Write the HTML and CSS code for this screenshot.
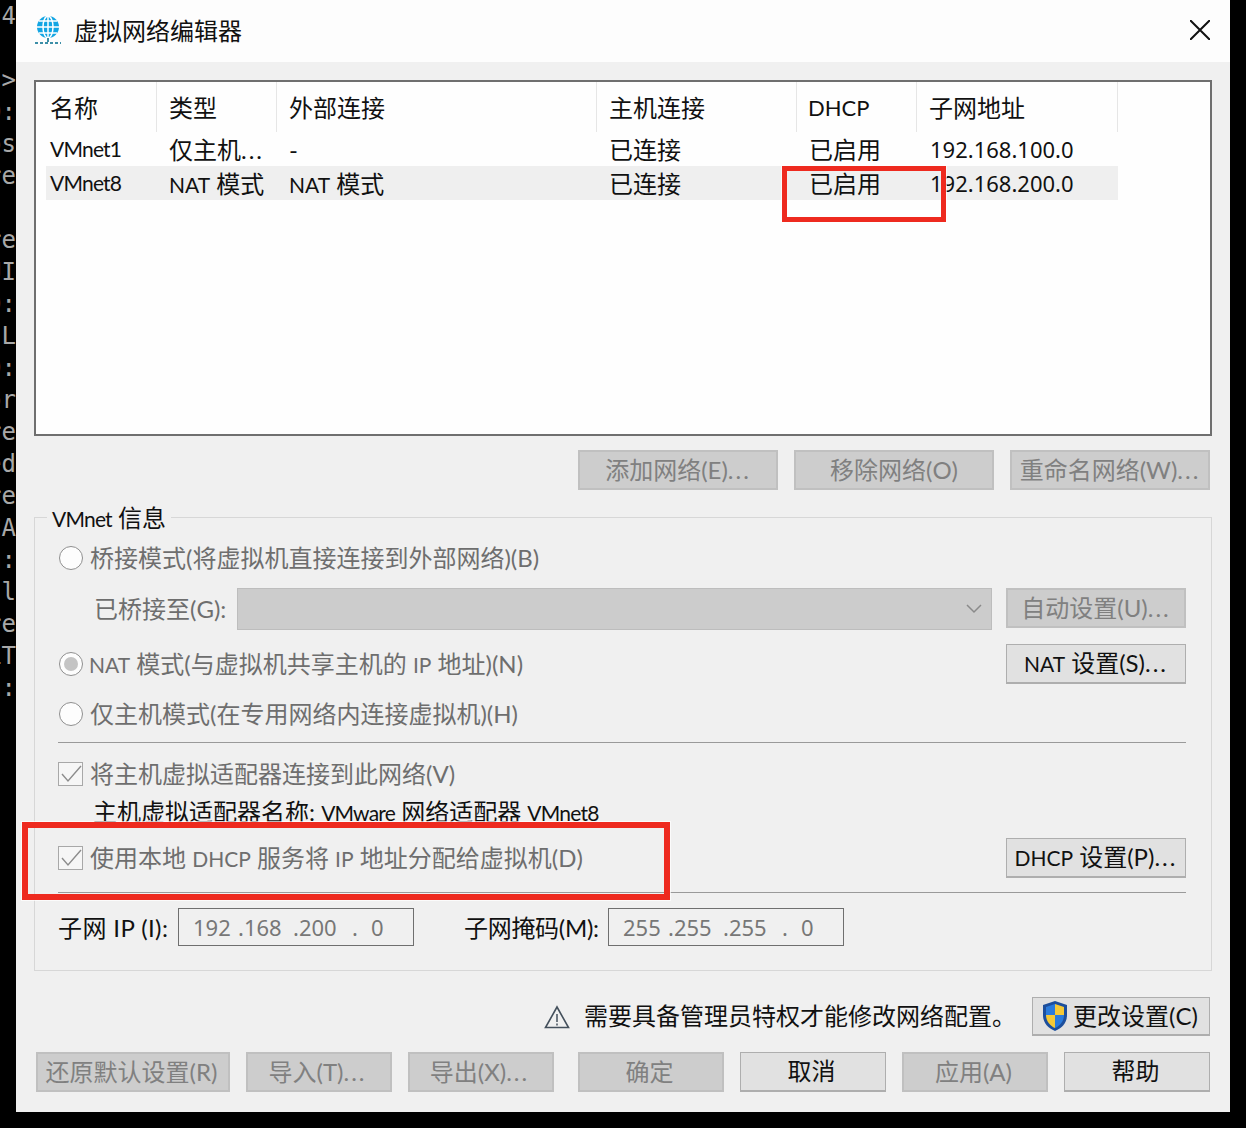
FILE: index.html
```html
<!DOCTYPE html>
<html lang="zh-CN">
<head>
<meta charset="utf-8">
<title>虚拟网络编辑器</title>
<link rel="stylesheet" href="styles.css">
</head>
<body>
<div class="terminal">
  <div>4</div><div></div><div>&gt;</div><div>0:</div><div>os</div><div>re</div><div></div><div>re</div><div>UI</div><div>0:</div><div>L</div><div>0:</div><div>or</div><div>re</div><div>ed</div><div>re</div><div>CA</div><div>a:</div><div>l</div><div>re</div><div>LT</div><div>a:</div>
</div>
<div class="window">
  <header class="titlebar">
    <svg class="globe" viewBox="0 0 28 30" width="28" height="30">
      <circle cx="14" cy="12" r="11" fill="#12a5e3"/>
      <g fill="none" stroke="#fff" stroke-width="1.5">
        <ellipse cx="14" cy="12" rx="5" ry="11"/>
        <path d="M14 1v22M3 12h22M5 6h18M5 18h18"/>
      </g>
      <path d="M14 23v4" stroke="#3d8fa8" stroke-width="2"/>
      <path d="M1 28h26" stroke="#3d8fa8" stroke-width="2" stroke-dasharray="3 2"/>
    </svg>
    <span class="title">虚拟网络编辑器</span>
    <svg class="close" viewBox="0 0 20 20" width="20" height="20"><path d="M0 0l20 20M20 0L0 20" stroke="#111" stroke-width="2"/></svg>
  </header>
  <main class="content">
    <section class="list">
      <div class="row head">
        <div class="cell c1">名称</div><div class="cell c2">类型</div><div class="cell c3">外部连接</div><div class="cell c4">主机连接</div><div class="cell c5 latin">DHCP</div><div class="cell c6">子网地址</div>
      </div>
      <div class="row">
        <div class="cell c1 vm">VMnet1</div><div class="cell c2">仅主机<span class="dots">...</span></div><div class="cell c3">-</div><div class="cell c4">已连接</div><div class="cell c5">已启用</div><div class="cell c6 ip">192.168.100.0</div>
      </div>
      <div class="row selected">
        <div class="cell c1 vm">VMnet8</div><div class="cell c2"><span class="en">NAT</span> 模式</div><div class="cell c3"><span class="en">NAT</span> 模式</div><div class="cell c4">已连接</div><div class="cell c5">已启用</div><div class="cell c6 ip">192.168.200.0</div>
      </div>
    </section>
    <div class="list-actions">
      <button class="btn off wide">添加网络(E)<span class="dots">...</span></button>
      <button class="btn off wide">移除网络(O)</button>
      <button class="btn off wide">重命名网络(W)<span class="dots">...</span></button>
    </div>
    <section class="group">
      <span class="legend"><span class="vm">VMnet</span> 信息</span>
      <div class="line r1"><span class="radio"></span><span class="dim">桥接模式(将虚拟机直接连接到外部网络)(B)</span></div>
      <div class="line r2">
        <span class="dim bridge-label">已桥接至(G):</span>
        <div class="select"><svg viewBox="0 0 16 10" width="16" height="10"><path d="M1 1l7 7 7-7" fill="none" stroke="#8a8a8a" stroke-width="1.5"/></svg></div>
        <button class="btn off side">自动设置(U)<span class="dots">...</span></button>
      </div>
      <div class="line r3"><span class="radio on"></span><span class="dim nat"><span class="en">NAT</span> 模式(与虚拟机共享主机的 <span class="en">IP</span> 地址)(N)</span><button class="btn side push"><span class="en">NAT</span> 设置(S)<span class="dots">...</span></button></div>
      <div class="line r4"><span class="radio"></span><span class="dim">仅主机模式(在专用网络内连接虚拟机)(H)</span></div>
      <div class="rule r5"></div>
      <div class="line r6"><span class="check"><svg viewBox="0 0 24 24" width="24" height="24"><path d="M4 12l6 7L23 4" fill="none" stroke="#8c8c8c" stroke-width="1.4"/></svg></span><span class="dim">将主机虚拟适配器连接到此网络(V)</span></div>
      <div class="line r7"><span class="adapter">主机虚拟适配器名称: <span class="vm">VMware</span> 网络适配器 <span class="vm">VMnet8</span></span></div>
      <div class="line r8"><span class="check"><svg viewBox="0 0 24 24" width="24" height="24"><path d="M4 12l6 7L23 4" fill="none" stroke="#8c8c8c" stroke-width="1.4"/></svg></span><span class="dim">使用本地 <span class="en">DHCP</span> 服务将 <span class="en">IP</span> 地址分配给虚拟机(D)</span><button class="btn side push"><span class="en">DHCP</span> 设置(P)<span class="dots">...</span></button></div>
      <div class="rule r9"></div>
      <div class="line r10">
        <span class="field-label">子网 IP (I):</span>
        <div class="ipbox"><span>192</span><span>.168</span><span>.200</span><span>.</span><span>0</span></div>
        <span class="field-label second">子网掩码(M):</span>
        <div class="ipbox"><span>255</span><span>.255</span><span>.255</span><span>.</span><span>0</span></div>
      </div>
    </section>
    <div class="warn">
      <svg class="warn-icon" viewBox="0 0 26 24" width="26" height="24"><path d="M13 2L1.5 22.5h23z" fill="none" stroke="#44505c" stroke-width="1.6"/><path d="M13 9v8M13 18.5v2" stroke="#44505c" stroke-width="1.5"/></svg>
      <span class="warn-text">需要具备管理员特权才能修改网络配置。</span>
      <button class="btn change">
        <svg viewBox="0 0 28 32" width="28" height="32"><path d="M14 1l12 4v10c0 8-5 13-12 16C7 28 2 23 2 15V5z" fill="#1d4f9c"/><path d="M14 4l9 3v8H14z" fill="#f6c935"/><path d="M14 4L5 7v8h9z" fill="#2a7bdc"/><path d="M5 15h9v13c-5-2-9-7-9-13z" fill="#f6c935"/><path d="M23 15h-9v13c5-2 9-7 9-13z" fill="#2a7bdc"/></svg>
        <span>更改设置(C)</span>
      </button>
    </div>
    <div class="bottom">
      <button class="btn off b1">还原默认设置(R)</button>
      <button class="btn off b2">导入(T)<span class="dots">...</span></button>
      <button class="btn off b2">导出(X)<span class="dots">...</span></button>
      <button class="btn off b2 gap">确定</button>
      <button class="btn b2">取消</button>
      <button class="btn off b2">应用(A)</button>
      <button class="btn b2">帮助</button>
    </div>
  </main>
</div>
<div class="mark mark-dhcp"></div>
<div class="mark mark-local"></div>
</body>
</html>
```
FILE: styles.css
```css
* { box-sizing: border-box; }
html, body { margin: 0; height: 100%; }
body {
  background: #000;
  display: flex;
  align-items: flex-start;
  overflow: hidden;
  position: relative;
  font-family: "Lato", "Noto Sans CJK SC", sans-serif;
  font-size: 24px;
  color: #111;
}
.terminal {
  width: 16px;
  flex: none;
  overflow: hidden;
  font-family: "DejaVu Sans Mono", monospace;
  font-size: 24px;
  color: #a8a8a8;
}
.terminal div { height: 32px; line-height: 32px; white-space: nowrap; display: flex; justify-content: flex-end; }
.window { width: 1214px; height: 1112px; background: #f0f0f0; display: flex; flex-direction: column; flex: none; }
.titlebar { height: 62px; background: #fdfdfd; display: flex; align-items: center; padding: 0 20px 0 18px; }
.globe { margin-top: -2px; }
.title { margin-left: 12px; font-size: 24px; line-height: 1; }
.close { margin-left: auto; margin-top: -3px; }
.content { padding: 18px 18px 20px; flex: 1; display: flex; flex-direction: column; }
.list { height: 356px; border: 2px solid #6f6f6f; background: #fefefe; padding: 0 0 0 10px; }
.row { display: flex; height: 34px; width: 1072px; align-items: center; line-height: 36px; white-space: nowrap; }
.row.head { height: 50px; }
.row.selected { background: #efefef; }
.cell { padding-left: 4px; height: 100%; font-size: 24px; }
.head .cell { border-right: 1px solid #e6e6e6; line-height: 52px; }
.c1 { width: 111px; } .c2 { width: 120px; padding-left: 12px; } .c3 { width: 320px; padding-left: 12px; }
.c4 { width: 200px; padding-left: 12px; } .c5 { width: 120px; padding-left: 12px; } .c6 { width: 201px; padding-left: 12px; }
.latin { font-size: 22px; }
.en { font-size: 21px; }
.vm { font-size: 21px; letter-spacing: -.8px; }
.cell.vm { line-height: 34px; }
.head .c5.latin { padding-left: 11px; }
.ip { font-family: "Noto Sans", sans-serif; font-size: 22px; padding-left: 13px; line-height: 34px; }
.dots { letter-spacing: 2px; }
.list-actions { margin-top: 14px; padding-right: 2px; display: flex; justify-content: flex-end; gap: 16px; }
.btn {
  height: 40px; padding: 0; font: inherit; color: #111; line-height: 1; white-space: nowrap;
  background: #e1e1e1; border: 2px solid #aeaeae; border-width: 1px 1px 2px 1px;
  display: flex; align-items: baseline; justify-content: center;
  padding-top: 6px;
}
.btn.off { background: #cdcdcd; border: 2px solid #c0c0c0; color: #808080; }
.btn > .en { margin-right: 6px; }
.wide { width: 200px; }
.group { position: relative; margin-top: 27px; height: 454px; border: 1px solid #d7d7d7; padding: 20px 25px 0 23px; display: flex; flex-direction: column; }
.legend { position: absolute; left: 12px; top: -16px; padding: 0 5px; background: #f0f0f0; line-height: 32px; white-space: nowrap; }
.line { display: flex; align-items: center; height: 40px; }
.dim { color: #6e6e6e; margin-bottom: 4px; white-space: nowrap; }
.radio { width: 24px; height: 24px; margin-left: 1px; margin-right: 7px; border-radius: 50%; border: 1px solid #8f8f8f; background: #fdfdfd; flex: none; display: flex; align-items: center; justify-content: center; }
.radio.on::after { content: ""; width: 14px; height: 14px; border-radius: 50%; background: #c4c4c4; }
.radio.on { margin-right: 6px; }
.check { width: 25px; height: 24px; margin-right: 7px; border: 1px solid #a8a8a8; background: #f6f6f6; flex: none; }
.check svg { display: block; margin: -1px; }
.r2 { margin-top: 10px; height: 42px; }
.bridge-label { width: 179px; padding-left: 36px; flex: none; }
.select { width: 755px; height: 42px; background: #cccccc; border: 1px solid #bdbdbd; display: flex; align-items: center; justify-content: flex-end; padding-right: 9px; flex: none; }
.side { width: 180px; margin-left: auto; }
.push { margin-left: auto; }
.r2 .side { height: 40px; align-self: flex-start; }
.r3 { margin-top: 14px; }
.r4 { margin-top: 10px; }
.rule { height: 1px; background: #9a9a9a; flex: none; }
.r5 { margin-top: 8px; }
.r6 { margin-top: 11px; }
.r7 { height: 32px; margin-top: 2px; }
.adapter { padding-left: 35px; margin-bottom: 4px; white-space: nowrap; }
.r8 { margin-top: 10px; }
.r9 { margin-top: 14px; }
.r10 { margin-top: 15px; height: 38px; }
.field-label { white-space: nowrap; width: 120px; flex: none; margin-bottom: 2px; letter-spacing: .4px; }
.field-label.second { margin-left: 50px; width: 144px; letter-spacing: -.3px; }
.ipbox { width: 236px; height: 38px; border: 1px solid #6f6f6f; background: #f0f0f0; display: flex; align-items: center; color: #777; font-family: "Noto Sans", sans-serif; font-size: 22px; padding-left: 14px; flex: none; }
.ipbox span:nth-child(1) { width: 45px; }
.ipbox span:nth-child(2) { width: 55px; }
.ipbox span:nth-child(3) { width: 59px; }
.ipbox span:nth-child(4) { width: 19px; }
.warn { margin-top: 26px; padding-right: 2px; height: 39px; display: flex; align-items: center; justify-content: flex-end; }
.warn-icon { flex: none; }
.warn-text { margin-left: 14px; margin-right: 16px; margin-bottom: 4px; white-space: nowrap; }
.change { width: 178px; height: 39px; gap: 4px; justify-content: flex-start; padding: 0 0 0 8px; align-items: center; }
.change svg { flex: none; }
.bottom { margin-top: 16px; padding-left: 2px; display: flex; gap: 16px; }
.bottom .btn { padding-right: 3px; }
.b1 { width: 194px; }
.b2 { width: 146px; }
.gap { margin-left: 8px; }
.mark { position: absolute; border: 5px solid #ee2a1f; box-shadow: 0 0 0 1px rgba(255,255,255,.7); }
.mark-dhcp { left: 782px; top: 166px; width: 164px; height: 56px; }
.mark-local { left: 22px; top: 822px; width: 648px; height: 78px; border-width: 6px; }
```
